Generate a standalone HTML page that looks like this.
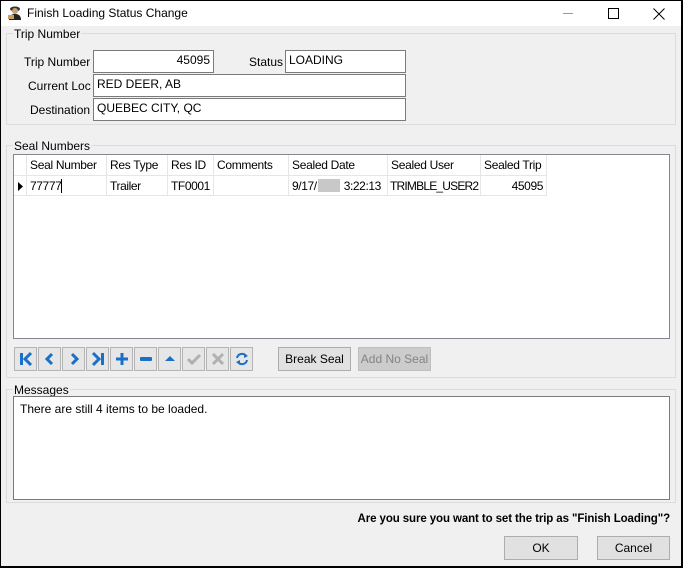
<!DOCTYPE html>
<html><head><meta charset="utf-8"><style>
*{box-sizing:border-box;margin:0;padding:0}
body{width:683px;height:568px;overflow:hidden;background:#000;font-family:"Liberation Sans",sans-serif;font-size:12px;color:#000;position:relative}
#win{position:absolute;left:1px;top:1px;width:680px;height:565px;background:#f0f0f0}
#title{position:absolute;left:0;top:0;width:680px;height:25px;background:#fff}
.a{position:absolute}
.lbl{position:absolute;white-space:nowrap}
.inp{position:absolute;background:#fff;border:1px solid #7a7a7a;height:23px;padding:2px 3px;white-space:nowrap}
.grp{position:absolute;border:1px solid #dcdcdc}
.glbl{position:absolute;background:#f0f0f0;padding:0 1px;white-space:nowrap}
.btn{position:absolute;background:#e1e1e1;border:1px solid #adadad;text-align:center;line-height:22px}
.th{position:absolute;top:0;height:21px;line-height:21px;padding-left:3px;border-right:1px solid #e6e6e6;border-bottom:1px solid #e6e6e6;white-space:nowrap;letter-spacing:-0.3px;overflow:hidden}
.td{position:absolute;top:21px;height:20px;line-height:20px;padding-left:3px;border-right:1px solid #e6e6e6;border-bottom:1px solid #e6e6e6;white-space:nowrap;letter-spacing:-0.4px;overflow:hidden}
.nb{position:absolute;top:346px;width:23px;height:24px;background:#e6e6e6;border:1px solid #b4b4b4}
.nb svg{position:absolute;left:3px;top:3px}
</style></head><body>
<div id="win">
<div id="title">
<svg class="a" style="left:6px;top:4px" width="16" height="16" viewBox="0 0 16 16"><ellipse cx="8" cy="4" rx="5" ry="2.5" fill="#333"/><circle cx="8" cy="6" r="3" fill="#c8a070"/><path d="M2 15 C2 10 5 9 8 9 C11 9 14 10 14 15Z" fill="#222"/><rect x="1" y="10" width="6" height="4" fill="#c9a060"/></svg>
<div class="lbl" style="left:26px;top:5px">Finish Loading Status Change</div>
<div class="a" style="left:562px;top:12px;width:10px;height:1px;background:#999"></div>
<div class="a" style="left:607px;top:7px;width:11px;height:11px;border:1px solid #000"></div>
<svg class="a" style="left:652px;top:7px" width="12" height="12"><path d="M0.5 0.5L11.5 11.5M11.5 0.5L0.5 11.5" stroke="#000" stroke-width="1"/></svg>
</div>

<div class="grp" style="left:5px;top:32px;width:670px;height:92px"></div>
<div class="glbl" style="left:12px;top:26px">Trip Number</div>
<div class="lbl" style="left:23px;top:54px">Trip Number</div>
<div class="inp" style="left:92px;top:49px;width:121px;text-align:right">45095</div>
<div class="lbl" style="left:248px;top:54px">Status</div>
<div class="inp" style="left:284px;top:49px;width:121px">LOADING</div>
<div class="lbl" style="left:27px;top:78px">Current Loc</div>
<div class="inp" style="left:92px;top:73px;width:313px">RED DEER, AB</div>
<div class="lbl" style="left:29px;top:102px">Destination</div>
<div class="inp" style="left:92px;top:97px;width:313px">QUEBEC CITY, QC</div>

<div class="grp" style="left:5px;top:144px;width:670px;height:233px"></div>
<div class="glbl" style="left:12px;top:138px">Seal Numbers</div>
<div class="a" style="left:12px;top:153px;width:657px;height:185px;background:#fff;border:1px solid #828790">
 <div class="th" style="left:0;width:13px;padding:0"></div>
 <div class="th" style="left:13px;width:80px">Seal Number</div>
 <div class="th" style="left:93px;width:61px">Res Type</div>
 <div class="th" style="left:154px;width:46px">Res ID</div>
 <div class="th" style="left:200px;width:75px">Comments</div>
 <div class="th" style="left:275px;width:99px">Sealed Date</div>
 <div class="th" style="left:374px;width:93px">Sealed User</div>
 <div class="th" style="left:467px;width:66px">Sealed Trip</div>
 <div class="td" style="left:0;width:13px;padding:0"><svg class="a" style="left:4px;top:6px" width="5" height="9"><path d="M0 0L5 4.5L0 9Z" fill="#000"/></svg></div>
 <div class="td" style="left:13px;width:80px">77777<span style="display:inline-block;width:1px;height:14px;background:#000;vertical-align:-3px"></span></div>
 <div class="td" style="left:93px;width:61px">Trailer</div>
 <div class="td" style="left:154px;width:46px">TF0001</div>
 <div class="td" style="left:200px;width:75px"></div>
 <div class="td" style="left:275px;width:99px">9/17/<span style="display:inline-block;width:22px;height:13px;background:#c8c8c8;vertical-align:-2px;margin:0 4px 0 1px"></span>3:22:13</div>
 <div class="td" style="left:374px;width:93px;letter-spacing:-0.8px;padding-left:2px">TRIMBLE_USER2</div>
 <div class="td" style="left:467px;width:66px;text-align:right;padding-right:3px">45095</div>
</div>

<div class="nb" style="left:13px"><svg width="16" height="16"><rect x="2" y="2" width="3" height="12" fill="#1a6fc8"/><path d="M13 2L7 8L13 14" stroke="#1a6fc8" stroke-width="3" fill="none"/></svg></div>
<div class="nb" style="left:37px"><svg width="16" height="16"><path d="M10 3L5 8L10 13" stroke="#1a6fc8" stroke-width="3" fill="none"/></svg></div>
<div class="nb" style="left:61px"><svg width="16" height="16"><path d="M6 3L11 8L6 13" stroke="#1a6fc8" stroke-width="3" fill="none"/></svg></div>
<div class="nb" style="left:85px"><svg width="16" height="16"><path d="M3 2L9 8L3 14" stroke="#1a6fc8" stroke-width="3" fill="none"/><rect x="11" y="2" width="3" height="12" fill="#1a6fc8"/></svg></div>
<div class="nb" style="left:109px"><svg width="16" height="16"><rect x="2" y="6.5" width="12" height="3" fill="#1a6fc8"/><rect x="6.5" y="2" width="3" height="12" fill="#1a6fc8"/></svg></div>
<div class="nb" style="left:133px"><svg width="16" height="16"><rect x="2" y="6" width="12" height="4" rx="1" fill="#1a6fc8"/></svg></div>
<div class="nb" style="left:157px"><svg width="16" height="16"><path d="M3 10L8 5L13 10Z" fill="#1a6fc8"/></svg></div>
<div class="nb" style="left:181px"><svg width="16" height="16"><path d="M2 8L6 12L14 4" stroke="#b0b0b0" stroke-width="3" fill="none"/></svg></div>
<div class="nb" style="left:205px"><svg width="16" height="16"><path d="M3 3L13 13M13 3L3 13" stroke="#b0b0b0" stroke-width="3"/></svg></div>
<div class="nb" style="left:229px"><svg width="16" height="16"><path d="M3 7A5 5 0 0 1 12 5" stroke="#1a6fc8" stroke-width="2" fill="none"/><path d="M13 9A5 5 0 0 1 4 11" stroke="#1a6fc8" stroke-width="2" fill="none"/><path d="M10 2L14 5L10 7Z" fill="#1a6fc8"/><path d="M6 14L2 11L6 9Z" fill="#1a6fc8"/></svg></div>

<div class="btn" style="left:277px;top:346px;width:73px;height:24px">Break Seal</div>
<div class="btn" style="left:357px;top:346px;width:73px;height:24px;background:#ccc;border-color:#bfbfbf;color:#838383">Add No Seal</div>

<div class="grp" style="left:5px;top:388px;width:670px;height:114px"></div>
<div class="glbl" style="left:12px;top:382px">Messages</div>
<div class="a" style="left:12px;top:395px;width:657px;height:104px;background:#fff;border:1px solid #7a7a7a;padding:5px 6px">There are still 4 items to be loaded.</div>

<div class="lbl" style="right:11px;top:512px;font-weight:bold;font-size:11.5px;letter-spacing:-0.1px">Are you sure you want to set the trip as "Finish Loading"?</div>
<div class="btn" style="left:503px;top:535px;width:74px;height:24px">OK</div>
<div class="btn" style="left:596px;top:535px;width:73px;height:24px">Cancel</div>
</div>
</body></html>
